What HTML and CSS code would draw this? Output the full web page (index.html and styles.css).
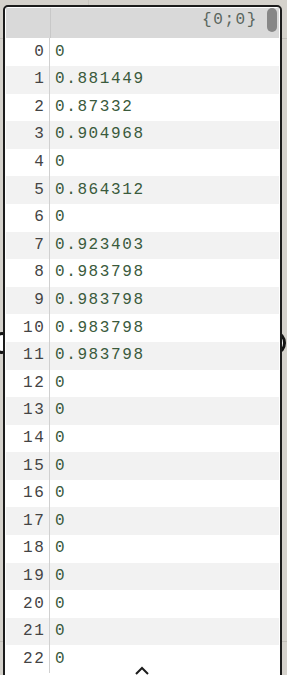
FILE: index.html
```html
<!DOCTYPE html>
<html>
<head>
<meta charset="utf-8">
<link rel="stylesheet" href="styles.css">
</head>
<body>
<div class="canvas">
  <div class="grid-v"></div>
  <div class="grid-h gh1"></div>
  <div class="grid-h gh2"></div>
  <div class="grip grip-left"></div>
  <div class="grip grip-right"></div>
  <div class="panel">
    <div class="header">
      <div class="idx-col"></div>
      <div class="path">{0;0}</div>
      <div class="thumb"></div>
    </div>
    <div class="rows">
      <div class="row"><span class="idx">0</span><span class="val">0</span></div>
      <div class="row"><span class="idx">1</span><span class="val">0.881449</span></div>
      <div class="row"><span class="idx">2</span><span class="val">0.87332</span></div>
      <div class="row"><span class="idx">3</span><span class="val">0.904968</span></div>
      <div class="row"><span class="idx">4</span><span class="val">0</span></div>
      <div class="row"><span class="idx">5</span><span class="val">0.864312</span></div>
      <div class="row"><span class="idx">6</span><span class="val">0</span></div>
      <div class="row"><span class="idx">7</span><span class="val">0.923403</span></div>
      <div class="row"><span class="idx">8</span><span class="val">0.983798</span></div>
      <div class="row"><span class="idx">9</span><span class="val">0.983798</span></div>
      <div class="row"><span class="idx">10</span><span class="val">0.983798</span></div>
      <div class="row"><span class="idx">11</span><span class="val">0.983798</span></div>
      <div class="row"><span class="idx">12</span><span class="val">0</span></div>
      <div class="row"><span class="idx">13</span><span class="val">0</span></div>
      <div class="row"><span class="idx">14</span><span class="val">0</span></div>
      <div class="row"><span class="idx">15</span><span class="val">0</span></div>
      <div class="row"><span class="idx">16</span><span class="val">0</span></div>
      <div class="row"><span class="idx">17</span><span class="val">0</span></div>
      <div class="row"><span class="idx">18</span><span class="val">0</span></div>
      <div class="row"><span class="idx">19</span><span class="val">0</span></div>
      <div class="row"><span class="idx">20</span><span class="val">0</span></div>
      <div class="row"><span class="idx">21</span><span class="val">0</span></div>
      <div class="row"><span class="idx">22</span><span class="val">0</span></div>
    </div>
    <svg class="caret" width="16" height="9" viewBox="0 0 16 9"><path d="M2 8 L8 2 L14 8" fill="none" stroke="#1c1c1c" stroke-width="2"/></svg>
  </div>
</div>
</body>
</html>
```

FILE: styles.css
```css
html, body {
  margin: 0;
  padding: 0;
  background: #d5d2cc;
  overflow: hidden;
}

.canvas {
  position: relative;
  width: 287px;
  height: 675px;
  overflow: hidden;
  padding-top: 5px;
  padding-left: 3px;
  box-sizing: border-box;
}

.grid-v {
  position: absolute;
  left: 88px;
  top: 0;
  width: 1px;
  height: 675px;
  background: #c9c6c0;
}

.grid-h {
  position: absolute;
  left: 0;
  width: 287px;
  height: 1px;
  background: #c2bfb9;
}
.gh1 { top: 38px; }
.gh2 { top: 641px; }

.grip {
  position: absolute;
  width: 12px;
  height: 16px;
  border: 3px solid #141414;
  border-radius: 50%;
  background: #ffffff;
}
.grip-left { left: -7px; top: 332px; }
.grip-right { left: 268px; top: 332px; }

.panel {
  position: relative;
  width: 279px;
  height: 690px;
  box-sizing: border-box;
  border: 2px solid #1c1c1c;
  border-radius: 5px;
  background: #ffffff;
  padding: 1px;
  font-family: "Liberation Mono", "Courier New", monospace;
  font-size: 16px;
  letter-spacing: 1.6px;
}

.header {
  position: relative;
  display: flex;
  height: 30.4px;
  background: #d9d9d9;
  align-items: center;
}

.header .idx-col {
  width: 44px;
  height: 100%;
  border-right: 1px solid #c8c8c8;
  flex: none;
}

.path {
  flex: 1;
  text-align: right;
  padding-right: 21px;
  color: #5a665e;
  margin-top: -7px;
}

.thumb {
  position: absolute;
  right: 2px;
  top: 0;
  width: 10px;
  height: 24px;
  border-radius: 5px;
  background: #878787;
}

.row {
  display: flex;
  height: 27.6px;
  align-items: center;
  line-height: 1;
}

.row:nth-child(even) {
  background: #f2f2f2;
}

.idx {
  width: 44px;
  flex: none;
  box-sizing: border-box;
  text-align: right;
  padding-right: 3.5px;
  color: #444444;
  align-self: stretch;
  display: flex;
  align-items: center;
  justify-content: flex-end;
  border-right: 1px solid #d0d0d0;
  padding-bottom: 1px;
}

.val {
  padding-left: 5px;
  color: #3a5a3c;
  padding-bottom: 1px;
}

.caret {
  position: absolute;
  left: 129px;
  top: 659px;
}
```
